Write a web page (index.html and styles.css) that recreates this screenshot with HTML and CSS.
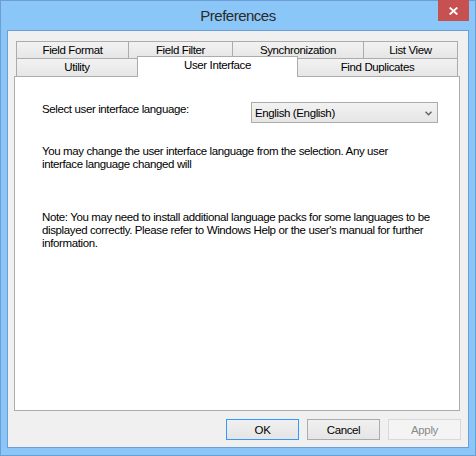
FILE: index.html
```html
<!DOCTYPE html>
<html>
<head>
<meta charset="utf-8">
<link rel="stylesheet" href="styles.css">
</head>
<body>
<div class="window">
  <div class="titlebar">
    <div class="title">Preferences</div>
    <div class="close">
      <svg width="9" height="8" viewBox="0 0 9 8"><path d="M0.7 0.5 L8.3 7.5 M8.3 0.5 L0.7 7.5" stroke="#fff" stroke-width="1.8"/></svg>
    </div>
  </div>
  <div class="client">
    <div class="tabs">
      <div class="tabrow row1">
        <div class="tab t-format">Field Format</div>
        <div class="tab t-filter">Field Filter</div>
        <div class="tab t-sync">Synchronization</div>
        <div class="tab t-list">List View</div>
      </div>
      <div class="tabrow row2">
        <div class="tab t-utility">Utility</div>
        <div class="tab t-ui selected">User Interface</div>
        <div class="tab t-dup">Find Duplicates</div>
      </div>
    </div>
    <div class="panel">
      <div class="langrow">
        <span class="label">Select user interface language:</span>
        <div class="select">
          <span>English (English)</span>
          <svg width="7" height="5" viewBox="0 0 7 5"><path d="M0.5 0.8 L3.5 3.8 L6.5 0.8" stroke="#606060" stroke-width="1.3" fill="none"/></svg>
        </div>
      </div>
      <p class="p1">You may change the user interface language from the selection. Any user<br>interface language changed will</p>
      <p class="p2">Note: You may need to install additional language packs for some languages to be<br>displayed correctly. Please refer to Windows Help or the user's manual for further<br>information.</p>
    </div>
    <div class="buttons">
      <div class="btn default">OK</div>
      <div class="btn">Cancel</div>
      <div class="btn disabled">Apply</div>
    </div>
  </div>
</div>
</body>
</html>
```
FILE: styles.css
```css
html, body {
  margin: 0;
  padding: 0;
}
body {
  width: 476px;
  height: 456px;
  overflow: hidden;
  font-family: "Liberation Sans", Arial, sans-serif;
  font-size: 11.5px;
  letter-spacing: -0.38px;
  color: #000;
}
.window {
  box-sizing: border-box;
  width: 476px;
  height: 456px;
  border: 1px solid #6d9dd2;
  background: #8bc6f8;
  display: flex;
  flex-direction: column;
}
.titlebar {
  height: 29px;
  display: grid;
  grid-template-columns: 1fr;
  grid-template-rows: 29px;
}
.title {
  grid-area: 1 / 1;
  justify-self: center;
  align-self: start;
  margin-top: 4px;
  font-size: 15px;
  letter-spacing: -0.5px;
  line-height: 21px;
  color: #2a2a2a;
}
.close {
  grid-area: 1 / 1;
  justify-self: end;
  align-self: start;
  margin-top: -1px;
  margin-right: 6px;
  width: 31px;
  height: 21px;
  background: #c75050;
  display: flex;
  align-items: center;
  justify-content: center;
}
.client {
  flex: 1;
  margin: 0 6px 7px 6px;
  border: 1px solid #6d9dd2;
  background: #f0f0f0;
  padding: 10px 8px 0 6px;
  display: flex;
  flex-direction: column;
}
.tabs {
  display: flex;
  flex-direction: column;
  margin-left: 2px;
}
.tabrow {
  display: flex;
}
.tab {
  box-sizing: border-box;
  border: 1px solid #acacac;
  border-bottom: none;
  background: linear-gradient(#f2f2f2, #e6e6e6);
  margin-left: -1px;
  text-align: center;
  line-height: 16px;
}
.tab:first-child {
  margin-left: 0;
}
.row1 .tab {
  height: 17px;
}
.row2 .tab {
  height: 18px;
}
.t-format { width: 113px; }
.t-filter { width: 105px; }
.t-sync { width: 132px; }
.t-list { width: 95px; }
.t-utility { width: 122px; line-height: 17px; }
.t-ui { width: 161px; }
.t-dup { width: 161px; line-height: 17px; }
.tab.selected {
  height: 21px;
  margin-top: -2px;
  margin-bottom: -1px;
  background: #fff;
  z-index: 1;
  line-height: 16px;
}
.panel {
  box-sizing: border-box;
  width: 446px;
  height: 335px;
  border: 1px solid #acacac;
  background: #fff;
  padding: 25px 0 0 27px;
}
.langrow {
  display: grid;
  grid-template-columns: 209px 187px;
  align-items: start;
}
.label {
  padding-top: 1px;
  line-height: 13px;
}
.select {
  box-sizing: border-box;
  height: 21px;
  border: 1px solid #acacac;
  background: linear-gradient(#f2f2f2, #e6e6e6);
  display: flex;
  align-items: center;
  justify-content: space-between;
  padding: 1px 5px 0 3px;
}
.panel p {
  margin: 0;
  line-height: 13px;
}
.p1 {
  margin-top: 22px !important;
}
.p2 {
  margin-top: 40px !important;
}
.buttons {
  display: flex;
  justify-content: flex-end;
  gap: 8px;
  margin-top: 8px;
  margin-right: -1px;
}
.btn {
  box-sizing: border-box;
  width: 73px;
  height: 21px;
  border: 1px solid #acacac;
  background: linear-gradient(#f0f0f0, #e5e5e5);
  display: flex;
  align-items: center;
  justify-content: center;
}
.btn.default {
  border-color: #3399ff;
}
.btn.disabled {
  border-color: #d9d9d9;
  background: #f4f4f4;
  color: #8a8a8a;
}
```
